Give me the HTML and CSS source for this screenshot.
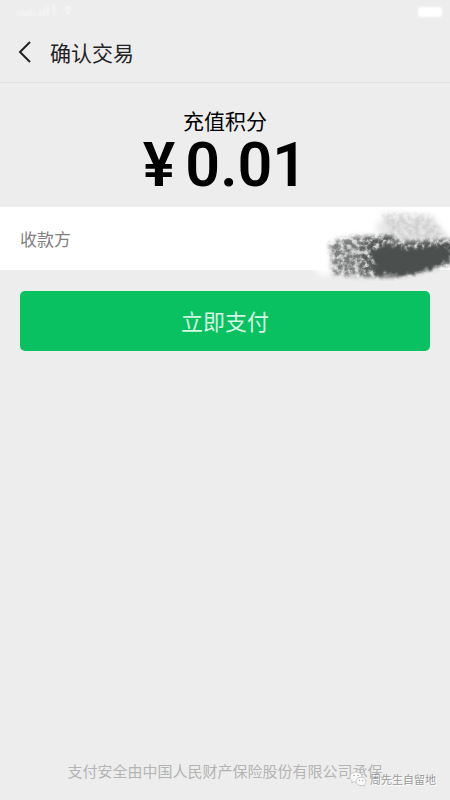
FILE: index.html
```html
<!DOCTYPE html>
<html lang="zh-CN">
<head>
<meta charset="utf-8">
<meta name="viewport" content="width=device-width, initial-scale=1">
<title>确认交易</title>
<link rel="stylesheet" href="styles.css">
</head>
<body>
<div class="page">
  <div class="status" aria-hidden="true">
    <svg class="signal" width="62" height="20" viewBox="0 0 62 20">
      <path d="M2 14V9M6 14V8M10 14V9M14 14V7M18 14V10M24 14V9M28 14V7M32 14V4M38 14V2M48 8l4-3 4 3M50 12l2-2 2 2"/>
    </svg>
    <span class="battery"></span>
  </div>
  <header class="bar">
    <button class="back" type="button" aria-label="返回">
      <svg width="14" height="22" viewBox="0 0 14 22"><path d="M12 1 2 11l10 10"/></svg>
    </button>
    <h1 class="title">确认交易</h1>
  </header>
  <main class="main">
    <section class="summary">
      <p class="item">充值积分</p>
      <p class="amount"><span>¥</span><span>0.01</span></p>
    </section>
    <section class="payee">
      <span>收款方</span>
      <svg class="smear" width="140" height="76" viewBox="0 0 140 76" aria-hidden="true">
        <defs>
          <filter id="rough" x="-10%" y="-20%" width="120%" height="140%">
            <feTurbulence type="fractalNoise" baseFrequency="0.22" numOctaves="3" seed="4" result="n"/>
            <feDisplacementMap in="SourceGraphic" in2="n" scale="12" xChannelSelector="R" yChannelSelector="G"/>
            <feGaussianBlur stdDeviation="1"/>
          </filter>
          <filter id="grain" x="-15%" y="-25%" width="130%" height="150%">
            <feTurbulence type="fractalNoise" baseFrequency="0.2" numOctaves="4" seed="8" result="n"/>
            <feColorMatrix in="n" type="matrix" values="0 0 0 0 0  0 0 0 0 0  0 0 0 0 0  3 0 0 0 -0.9" result="m"/>
            <feGaussianBlur in="SourceGraphic" stdDeviation="2" result="s"/>
            <feComposite in="s" in2="m" operator="in"/>
            <feGaussianBlur stdDeviation="0.7"/>
          </filter>
          <filter id="soft" x="-20%" y="-30%" width="140%" height="160%"><feGaussianBlur stdDeviation="3"/></filter>
        </defs>
        <path fill="#fff" filter="url(#soft)" d="M-5 54h110l-45 16H10z"/>
        <path fill="#d5d5d5" opacity=".6" filter="url(#soft)" d="M78 9l44 2 18 26-62-5-14-8z"/>
        <path fill="#999" opacity=".25" filter="url(#grain)" d="M70 7l50 3 18 24-54-2z"/>
        <path fill="#888" opacity=".35" filter="url(#soft)" d="M23 37l24-5 32 1 61 2v24l-38 8-24 4-56-2z"/>
        <path fill="#4c4f4e" opacity=".65" filter="url(#grain)" d="M19 38l20-6 38-2 11 6 54-1v24l-42 10-20 4-57-3z"/>
        <path fill="#4c4f4e" opacity=".75" filter="url(#grain)" d="M50 34l32-4 8 8 52-3v22l-42 12-48 1z"/>
        <path fill="#4c4f4e" filter="url(#rough)" d="M63 45l16-5 16 4 45-4 1 12-16 11-30 7-30-1z"/>
      </svg>
    </section>
    <section class="action">
      <button class="pay" type="button">立即支付</button>
    </section>
  </main>
  <footer class="footer">
    <p class="insured">支付安全由中国人民财产保险股份有限公司承保</p>
    <div class="watermark">
      <svg width="18" height="17" viewBox="0 0 18 17" aria-hidden="true">
        <path d="M7 1C3.500 1 1 3.200 1 6c0 1.700.9 3 2.200 3.900L2.700 12l2.200-1.200c.7.200 1.400.2 2.100.2 3.500 0 6-2.200 6-5S10.500 1 7 1z"/>
        <path d="M12 6.200c-2.900 0-5 1.900-5 4.200s2.100 4.200 5 4.200c.6 0 1.100-.1 1.600-.2l1.800 1-.4-1.700c1.200-.8 2-1.900 2-3.300 0-2.300-2.200-4.200-5-4.200z"/>
        <g class="eyes"><circle cx="5" cy="4.500" r=".8"/><circle cx="9" cy="4.500" r=".8"/><circle cx="10.500" cy="9.500" r=".7"/><circle cx="13.800" cy="9.500" r=".7"/></g>
      </svg>
      <span>周先生自留地</span>
    </div>
  </footer>
</div>
</body>
</html>
```
FILE: styles.css
```css
* {
  box-sizing: border-box;
}

body {
  margin: 0;
  background: #ededed;
  color: #000;
  font-family: "Noto Sans CJK SC", sans-serif;
}

h1,
p {
  margin: 0;
  font-weight: 400;
}

button {
  border: 0;
  font: inherit;
}

.page {
  min-height: 100vh;
  display: flex;
  flex-direction: column;
}

.status {
  height: 24px;
  padding: 0 8px 0 16px;
  display: flex;
  align-items: center;
  justify-content: space-between;
}

.signal {
  fill: none;
  stroke: #f7f7f7;
  stroke-width: 2;
  filter: blur(1px);
}

.battery {
  width: 24px;
  height: 10px;
  border-radius: 3px;
  background: #fff;
  filter: blur(1px);
}

.bar {
  height: 59px;
  padding: 0 18px 2px;
  display: flex;
  align-items: center;
  gap: 18px;
  border-bottom: 1px solid #e2e2e2;
}

.back {
  display: flex;
  padding: 0;
  background: none;
}

.back svg {
  fill: none;
  stroke: #222;
  stroke-width: 2;
}

.title {
  font-size: 21px;
  line-height: 32px;
  color: #222;
}

.main {
  flex: 1;
}

.summary {
  padding: 21px 20px 13px;
  text-align: center;
}

.item {
  font-size: 21px;
  line-height: 32px;
}

.amount {
  display: flex;
  justify-content: center;
  gap: 10px;
  font-family: Roboto, sans-serif;
  font-size: 61px;
  font-weight: 600;
  line-height: 58px;
}

.payee {
  position: relative;
  height: 63px;
  padding: 0 20px;
  display: flex;
  align-items: center;
  background: #fff;
  font-size: 17px;
  color: #808080;
}

.smear {
  position: absolute;
  right: 0;
  top: -2px;
}

.action {
  padding: 21px 20px;
}

.pay {
  display: block;
  width: 100%;
  height: 60px;
  padding: 0 0 2px;
  border-radius: 5px;
  background: #09c160;
  color: #d5f7e3;
  font-size: 22px;
}

.footer {
  position: relative;
  padding-bottom: 18px;
  text-align: center;
}

.insured {
  font-size: 15px;
  line-height: 22px;
  color: #b4b4b4;
}

.watermark {
  position: absolute;
  right: 14px;
  bottom: 11px;
  display: flex;
  align-items: center;
  gap: 3px;
  font-size: 11px;
  line-height: 20px;
  color: #999;
  text-shadow: 1px 1px 0 #fff;
}

.watermark svg {
  fill: #fafafa;
  stroke: #c8c8c8;
  stroke-width: 0;
}

.watermark path {
  stroke-width: 1;
}

.eyes {
  fill: #aaa;
}
```
